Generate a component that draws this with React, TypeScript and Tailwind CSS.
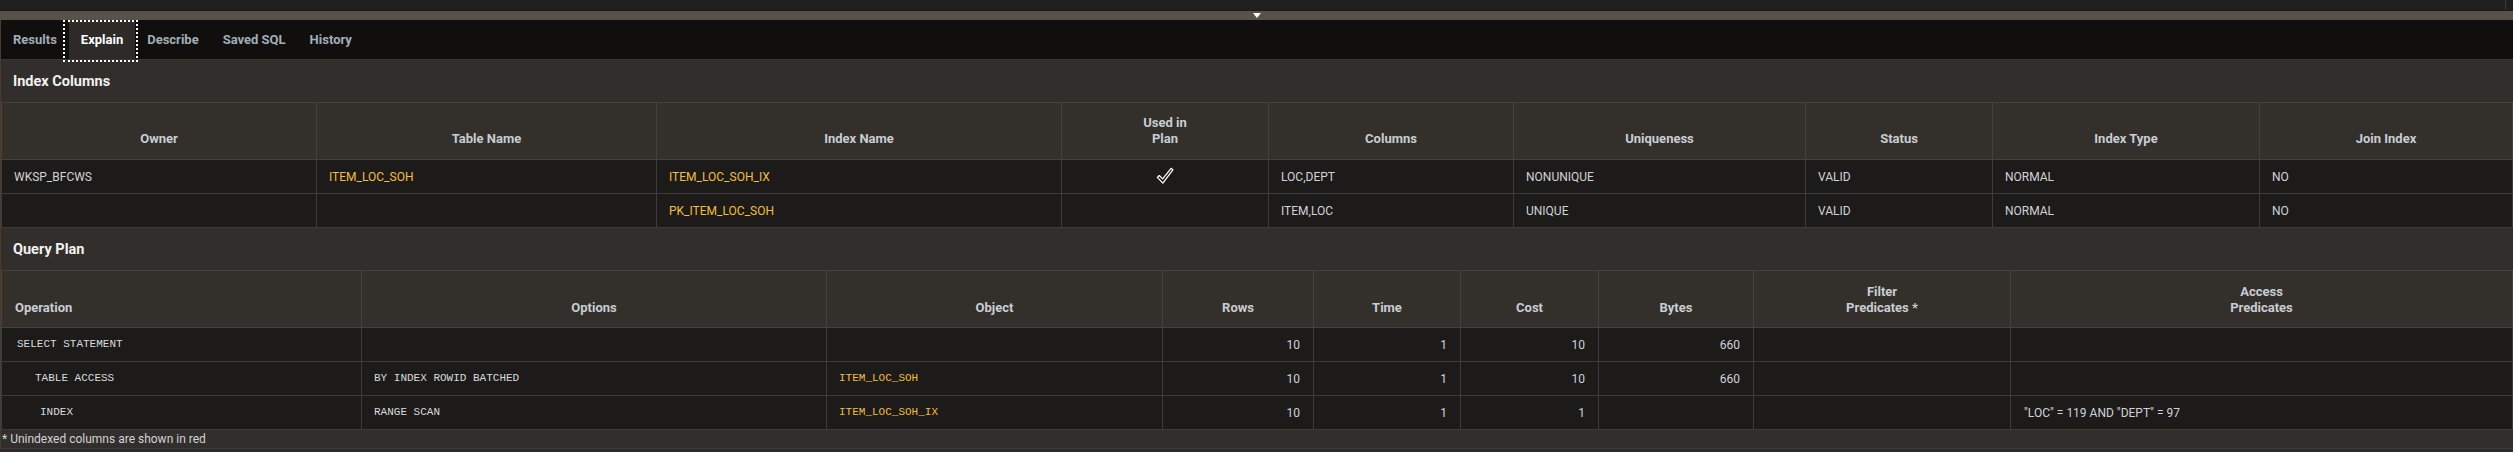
import type { ReactNode } from 'react';

// ── types ─────────────────────────────────────────────────────────────────────
interface Column {
  label: ReactNode;
  width: string;
  align: string;
}

type Cell = { text?: ReactNode; kind?: 'text' | 'link' | 'mono' | 'monoLink' | 'num' | 'check'; indent?: string };

// ── data ──────────────────────────────────────────────────────────────────────
const TABS = ['Results', 'Explain', 'Describe', 'Saved SQL', 'History'];

const INDEX_COLUMNS: Column[] = [
  { label: 'Owner', width: 'w-[315px]', align: 'text-center' },
  { label: 'Table Name', width: 'w-[340px]', align: 'text-center' },
  { label: 'Index Name', width: 'w-[405px]', align: 'text-center' },
  { label: <>Used in<br />Plan</>, width: 'w-[207px]', align: 'text-center' },
  { label: 'Columns', width: 'w-[245px]', align: 'text-center' },
  { label: 'Uniqueness', width: 'w-[292px]', align: 'text-center' },
  { label: 'Status', width: 'w-[187px]', align: 'text-center' },
  { label: 'Index Type', width: 'w-[267px]', align: 'text-center' },
  { label: 'Join Index', width: 'w-[253px]', align: 'text-center' },
];

const INDEX_ROWS: Cell[][] = [
  [
    { text: 'WKSP_BFCWS' },
    { text: 'ITEM_LOC_SOH', kind: 'link' },
    { text: 'ITEM_LOC_SOH_IX', kind: 'link' },
    { kind: 'check' },
    { text: 'LOC,DEPT' },
    { text: 'NONUNIQUE' },
    { text: 'VALID' },
    { text: 'NORMAL' },
    { text: 'NO' },
  ],
  [
    {},
    {},
    { text: 'PK_ITEM_LOC_SOH', kind: 'link' },
    {},
    { text: 'ITEM,LOC' },
    { text: 'UNIQUE' },
    { text: 'VALID' },
    { text: 'NORMAL' },
    { text: 'NO' },
  ],
];

const PLAN_COLUMNS: Column[] = [
  { label: 'Operation', width: 'w-[360px]', align: 'text-left' },
  { label: 'Options', width: 'w-[465px]', align: 'text-center' },
  { label: 'Object', width: 'w-[336px]', align: 'text-center' },
  { label: 'Rows', width: 'w-[151px]', align: 'text-center' },
  { label: 'Time', width: 'w-[147px]', align: 'text-center' },
  { label: 'Cost', width: 'w-[138px]', align: 'text-center' },
  { label: 'Bytes', width: 'w-[155px]', align: 'text-center' },
  { label: <>Filter<br />Predicates *</>, width: 'w-[257px]', align: 'text-center' },
  { label: <>Access<br />Predicates</>, width: 'w-[502px]', align: 'text-center' },
];

const PLAN_ROWS: Cell[][] = [
  [
    { text: 'SELECT STATEMENT', kind: 'mono', indent: 'pl-[15px]' },
    {},
    {},
    { text: '10', kind: 'num' },
    { text: '1', kind: 'num' },
    { text: '10', kind: 'num' },
    { text: '660', kind: 'num' },
    {},
    {},
  ],
  [
    { text: 'TABLE ACCESS', kind: 'mono', indent: 'pl-[33px]' },
    { text: 'BY INDEX ROWID BATCHED', kind: 'mono' },
    { text: 'ITEM_LOC_SOH', kind: 'monoLink' },
    { text: '10', kind: 'num' },
    { text: '1', kind: 'num' },
    { text: '10', kind: 'num' },
    { text: '660', kind: 'num' },
    {},
    {},
  ],
  [
    { text: 'INDEX', kind: 'mono', indent: 'pl-[38px]' },
    { text: 'RANGE SCAN', kind: 'mono' },
    { text: 'ITEM_LOC_SOH_IX', kind: 'monoLink' },
    { text: '10', kind: 'num' },
    { text: '1', kind: 'num' },
    { text: '1', kind: 'num' },
    {},
    {},
    { text: '"LOC" = 119 AND "DEPT" = 97', indent: 'pl-[13px]' },
  ],
];

// ── icons ─────────────────────────────────────────────────────────────────────
const OutlineCheck = () => (
  <svg width="18" height="18" viewBox="0 0 16 16" className="inline-block">
    <polygon
      points="1.2,9.2 2.9,7.6 5.9,10.6 13.4,1.2 15,2.5 6.1,14.3"
      fill="#1c1b19"
      stroke="#ffffff"
      strokeWidth="1.1"
      strokeLinejoin="round"
    />
  </svg>
);

// ── table cell ────────────────────────────────────────────────────────────────
const BodyCell = ({ cell }: { cell: Cell }) => {
  const kind = cell.kind ?? 'text';
  const pad = cell.indent ?? 'pl-[12px]';
  if (kind === 'check')
    return (
      <td className="border border-[#3e3b38] pb-[3px] text-center align-middle">
        <OutlineCheck />
      </td>
    );
  if (kind === 'num')
    return (
      <td className="border border-[#3e3b38] pr-[13px] text-right text-[12px] text-[#cfd3d8]">
        {cell.text}
      </td>
    );
  if (kind === 'mono' || kind === 'monoLink')
    return (
      <td
        className={`border border-[#3e3b38] ${pad} whitespace-pre font-['Liberation_Mono',monospace] text-[11px] ${
          kind === 'monoLink' ? 'text-[#f4bb45]' : 'text-[#d8dbde]'
        }`}
      >
        {cell.text}
      </td>
    );
  return (
    <td
      className={`border border-[#3e3b38] ${pad} text-[12px] ${
        kind === 'link' ? 'text-[#f4bb45]' : 'text-[#cfd3d8]'
      }`}
    >
      {cell.text}
    </td>
  );
};

const DataTable = ({ columns, rows, headPad }: { columns: Column[]; rows: Cell[][]; headPad: string }) => (
  <table className="w-[2511px] table-fixed border-collapse">
    <colgroup>
      {columns.map((c, i) => (
        <col key={i} className={c.width} />
      ))}
    </colgroup>
    <thead>
      <tr className="h-[57px] bg-[#33302c]">
        {columns.map((c, i) => (
          <th
            key={i}
            className={`border border-[#45413c] px-[13px] ${headPad} ${c.align} align-bottom text-[13px] font-bold leading-[16px] text-[#c8cdd3]`}
          >
            {c.label}
          </th>
        ))}
      </tr>
    </thead>
    <tbody className="bg-[#1c1b19]">
      {rows.map((r, ri) => (
        <tr key={ri} className="h-[34px]">
          {r.map((cell, ci) => (
            <BodyCell key={ci} cell={cell} />
          ))}
        </tr>
      ))}
    </tbody>
  </table>
);

const SectionTitle = ({ children }: { children: ReactNode }) => (
  <div className="flex h-[41px] items-center px-[12px] text-[14.5px] font-bold text-[#f1f1f1]">{children}</div>
);

// ── main ──────────────────────────────────────────────────────────────────────
export default function App() {
  return (
    <div className="h-[452px] w-full overflow-hidden bg-[#2d2a27] font-['Roboto','Liberation_Sans',sans-serif]">
      {/* top strip */}
      <div className="flex h-[11px] justify-end border-b border-[#191919] bg-[#1f1f1f]">
        <div className="mr-[7px] w-px bg-[#3a3a3a]" />
      </div>
      <div className="flex h-[9px] items-center justify-center bg-[#57514a]">
        <svg width="8" height="5" viewBox="0 0 8 5">
          <polygon points="0,0 8,0 4,5" fill="#ffffff" />
        </svg>
      </div>

      <div className="border-l border-[#4a3b2c]">
        {/* tabs */}
        <div className="flex h-[40px] border-b border-[#3b3733] bg-[#100f0d]">
          {TABS.map((t) => {
            const active = t === 'Explain';
            return (
              <div
                key={t}
                className={`relative flex items-center px-[12px] text-[13px] font-bold ${
                  active ? 'bg-[#2d2a27] text-white' : 'text-[#a2adb8]'
                }`}
              >
                {t}
                {active && (
                  <span className="absolute bottom-[-3px] left-[-6px] right-[-3px] top-0 border-2 border-dotted border-white" />
                )}
              </div>
            );
          })}
        </div>

        {/* index columns + query plan */}
        <div className="bg-[#322e2b] pt-px">
          <SectionTitle>Index Columns</SectionTitle>
          <DataTable columns={INDEX_COLUMNS} rows={INDEX_ROWS} headPad="pb-[12px]" />
          <div className="h-px" />
          <SectionTitle>Query Plan</SectionTitle>
          <DataTable columns={PLAN_COLUMNS} rows={PLAN_ROWS} headPad="pb-[11px]" />
          <div className="flex h-[19px] items-center border-b border-[#3f3b37] pl-[1px] text-[12px] text-[#cfd3d8]">
            * Unindexed columns are shown in red
          </div>
        </div>
      </div>
    </div>
  );
}
